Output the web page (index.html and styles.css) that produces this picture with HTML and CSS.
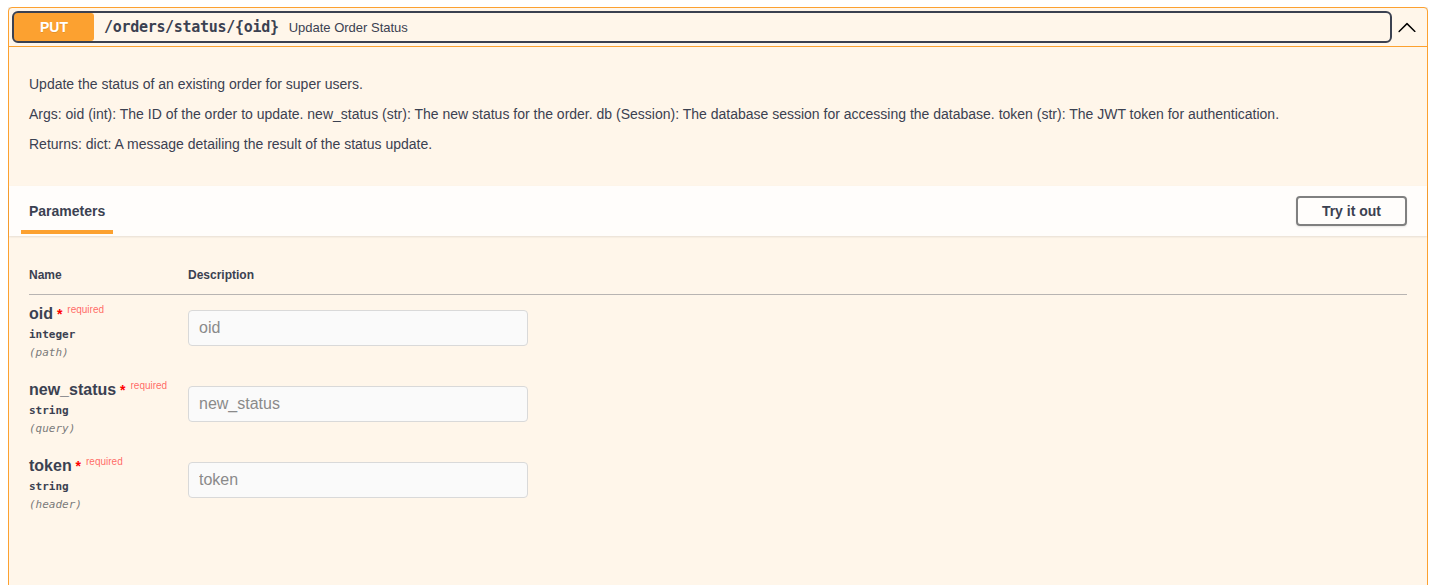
FILE: index.html
```html
<!DOCTYPE html>
<html>
<head>
<meta charset="utf-8">
<link rel="stylesheet" href="styles.css">
</head>
<body>
<div class="opblock">
  <div class="summary">
    <div class="summary-control">
      <span class="method">PUT</span>
      <span class="path">/orders/status/{oid}</span>
      <span class="summary-desc">Update Order Status</span>
    </div>
    <button class="arrow" aria-label="collapse">
      <svg width="20" height="20" viewBox="0 0 20 20"><path d="M17.418 14.908c.272.268.709.268.979 0 .27-.268.271-.701 0-.969l-7.908-7.83a.697.697 0 0 0-.979 0l-7.908 7.830a.68.68 0 0 0 0 .969.697.697 0 0 0 .979 0L10 7.767l7.418 7.141z" fill="#000"/></svg>
    </button>
  </div>
  <div class="body">
    <div class="description">
      <p>Update the status of an existing order for super users.</p>
      <p>Args: oid (int): The ID of the order to update. new_status (str): The new status for the order. db (Session): The database session for accessing the database. token (str): The JWT token for authentication.</p>
      <p>Returns: dict: A message detailing the result of the status update.</p>
    </div>
    <div class="section-header">
      <div class="tab"><h4>Parameters</h4></div>
      <button class="try-btn">Try it out</button>
    </div>
    <div class="table-container">
      <table class="parameters">
        <thead>
          <tr><th class="col-name">Name</th><th>Description</th></tr>
        </thead>
        <tbody>
          <tr>
            <td class="col-name">
              <div class="pname">oid<span class="star">&nbsp;*</span><span class="req">required</span></div>
              <div class="ptype">integer</div>
              <div class="pin">(path)</div>
            </td>
            <td><input type="text" placeholder="oid"></td>
          </tr>
          <tr>
            <td class="col-name">
              <div class="pname">new_status<span class="star">&nbsp;*</span><span class="req">required</span></div>
              <div class="ptype">string</div>
              <div class="pin">(query)</div>
            </td>
            <td><input type="text" placeholder="new_status"></td>
          </tr>
          <tr>
            <td class="col-name">
              <div class="pname">token<span class="star">&nbsp;*</span><span class="req">required</span></div>
              <div class="ptype">string</div>
              <div class="pin">(header)</div>
            </td>
            <td><input type="text" placeholder="token"></td>
          </tr>
        </tbody>
      </table>
    </div>
    <div class="spacer"></div>
  </div>
</div>
</body>
</html>
```
FILE: styles.css
```css
html { overflow: hidden; background: #fff; }
body {
  margin: 7px 6px 0 8px;
  font-family: "Liberation Sans", Arial, sans-serif;
  color: #3b4151;
}
.opblock {
  border: 1px solid #fca130;
  border-radius: 4px;
  background: #fff6ea;
  box-shadow: 0 0 3px rgba(0,0,0,.19);
}
.summary {
  display: flex;
  align-items: center;
  padding: 5px;
  border-bottom: 1px solid #fca130;
}
.summary-control {
  flex: 1;
  display: flex;
  align-items: center;
  outline: 2px solid #3b4151;
  border-radius: 4px;
  margin-right: 2px;
}
.method {
  min-width: 80px;
  padding: 6px 0;
  text-align: center;
  font-size: 14px;
  line-height: 16px;
  font-weight: 700;
  color: #fff;
  background: #fca130;
  border-radius: 3px;
  text-shadow: 0 1px 0 rgba(0,0,0,.1);
}
.path {
  padding: 0 10px;
  font-family: "DejaVu Sans Mono", monospace;
  font-size: 15px;
  letter-spacing: -0.3px;
  font-weight: 700;
  color: #3b4151;
}
.summary-desc {
  font-size: 13px;
  color: #3b4151;
}
.arrow {
  border: none;
  background: none;
  padding: 0 5px;
  height: 20px;
  display: flex;
  align-items: center;
  cursor: pointer;
}
.description {
  padding: 15px 20px;
  margin-bottom: 5px;
}
.description p {
  font-size: 14px;
  line-height: 16px;
  margin: 14px 0;
}
.section-header {
  display: flex;
  align-items: center;
  min-height: 50px;
  box-sizing: border-box;
  padding: 8px 20px 8px 12px;
  background: rgba(255,255,255,.8);
  box-shadow: 0 1px 2px rgba(0,0,0,.1);
}
.tab {
  position: relative;
  padding: 0 8px;
}
.tab h4 {
  margin: 0;
  font-size: 14px;
  line-height: 16px;
  font-weight: 700;
}
.tab::after {
  content: "";
  position: absolute;
  left: 0;
  right: 0;
  bottom: -15px;
  height: 4px;
  background: #fca130;
}
.try-btn {
  margin-left: auto;
  font-family: "Liberation Sans", Arial, sans-serif;
  font-size: 14px;
  line-height: 16px;
  font-weight: 700;
  color: #3b4151;
  padding: 5px 24px;
  border: 2px solid #808080;
  border-radius: 4px;
  background: transparent;
  box-shadow: 0 1px 2px rgba(0,0,0,.1);
}
.table-container {
  padding: 20px;
}
.parameters {
  width: 100%;
  border-collapse: collapse;
}
.parameters th {
  text-align: left;
  font-size: 12px;
  line-height: 14px;
  font-weight: 700;
  padding: 12px 0;
  border-bottom: 1px solid rgba(59,65,81,.2);
}
.col-name { width: 159px; }
.parameters td {
  vertical-align: top;
  padding: 10px 0;
}
.pname {
  font-size: 16px;
  line-height: 18px;
  font-weight: 700;
  white-space: nowrap;
}
.star { color: #f00; font-size: 14px; line-height: 0; }
.req {
  font-size: 10px;
  line-height: 0;
  font-weight: 400;
  color: rgba(255,0,0,.6);
  position: relative;
  top: -6px;
  padding-left: 5px;
}
.ptype {
  font-family: "DejaVu Sans Mono", monospace;
  font-size: 11px;
  line-height: 13px;
  font-weight: 600;
  padding: 5px 0 4px;
}
.pin {
  font-family: "DejaVu Sans Mono", monospace;
  font-size: 11px;
  line-height: 16px;
  font-style: italic;
  color: #7a7a7a;
}
.parameters input {
  display: block;
  box-sizing: border-box;
  width: 340px;
  height: 36px;
  margin: 5px 0;
  padding: 8px 10px;
  border: 1px solid #d9d9d9;
  border-radius: 4px;
  background: #fafafa;
  font-family: "Liberation Sans", Arial, sans-serif;
  font-size: 16px;
  color: #3b4151;
  outline: none;
}
.parameters input::placeholder { color: #8a8a8a; }
.spacer { height: 120px; }
```
